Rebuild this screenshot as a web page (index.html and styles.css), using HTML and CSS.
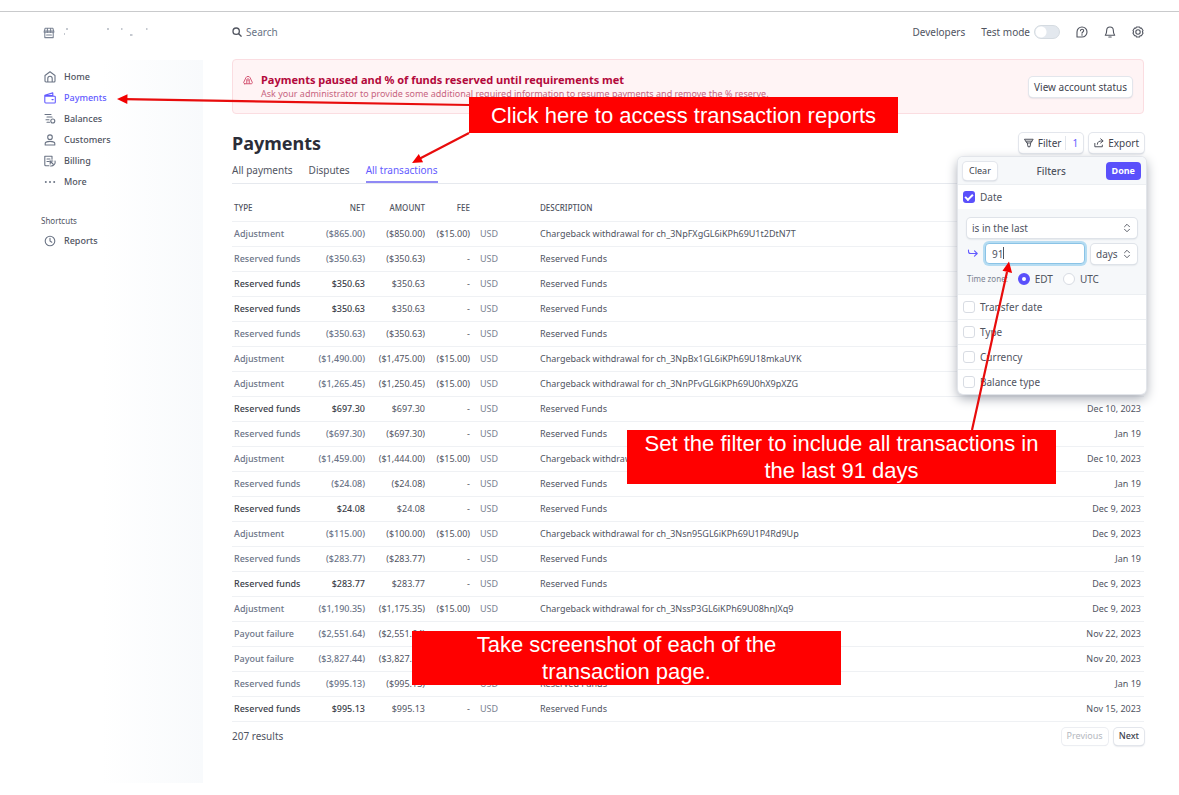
FILE: index.html
```html
<!DOCTYPE html>
<html lang="en">
<head>
<meta charset="utf-8">
<title>Payments</title>
<link rel="stylesheet" href="styles.css">
</head>
<body>
<div class="app">
  <aside class="sidebar">
    <div class="brand">
      <svg class="icon" viewBox="0 0 12 12"><path d="M2.2 1.2h7.6l1 3.2v.8H1.2v-.8zM1.8 5.4v5.2h8.4V5.4M1.2 4h9.6M4.4 1.4v4M7.6 1.4v4M3.6 8h4.8"/></svg>
      <svg class="smudge" viewBox="0 0 90 12"><path d="M2 2h2M0 7h1M43 2h2M57 2h1.500M66 8h2.500M82 2h1.500"/></svg>
    </div>
    <nav class="nav">
      <a href="#"><svg class="icon" viewBox="0 0 12 12"><path d="M1 4.500 6 .8l5 3.700v5.500a1 1 0 0 1-1 1H2a1 1 0 0 1-1-1zM3.800 11V7.500a2.200 2.200 0 0 1 4.400 0V11"/></svg>Home</a>
      <a href="#" class="active"><svg class="icon" viewBox="0 0 12 12"><path d="M1 4.200h9.500a.8.8 0 0 1 .8.8v5.200a.8.8 0 0 1-.8.8H1.700a.9.900 0 0 1-.9-.9V3.200L8.800.9v3.300M1 3.500h8M8 7.600h1.200" /></svg>Payments</a>
      <a href="#"><svg class="icon" viewBox="0 0 12 12"><path d="M1 1.500h6M3 4h5M2 6.800h3M3 9.200h2.500"/><circle cx="8.800" cy="8" r="2"/></svg>Balances</a>
      <a href="#"><svg class="icon" viewBox="0 0 12 12"><circle cx="6" cy="3.200" r="2.300"/><path d="M1.200 11V9.600c0-1.700 2-2.200 4.800-2.200s4.800.5 4.800 2.200V11z"/></svg>Customers</a>
      <a href="#"><svg class="icon" viewBox="0 0 12 12"><path d="M5 10.800H1.800a1 1 0 0 1-1-1V1.200H8v3M3 4h3M3 6.500h2M6 6l3 3M6.200 9V6h2.600M11 6a4 4 0 0 1-4.500 5"/></svg>Billing</a>
      <a href="#"><svg class="icon dots" viewBox="0 0 12 12"><circle cx="1.800" cy="6" r="1"/><circle cx="6" cy="6" r="1"/><circle cx="10.200" cy="6" r="1"/></svg>More</a>
    </nav>
    <h2 class="nav-title">Shortcuts</h2>
    <nav class="nav">
      <a href="#"><svg class="icon" viewBox="0 0 12 12"><circle cx="6" cy="6" r="4.800"/><path d="M6 3.200V6l1.800 1.200"/></svg>Reports</a>
    </nav>
  </aside>

  <main class="main">
    <header class="topbar">
      <label class="search">
        <svg class="icon small heavy" viewBox="0 0 12 12"><circle cx="5" cy="5" r="3.800"/><path d="m8 8 3 3"/></svg>
        <input type="search" placeholder="Search" aria-label="Search">
      </label>
      <div class="tools">
        <a href="#">Developers</a>
        <label class="switch">Test mode <input type="checkbox"></label>
        <button class="bare" aria-label="Help"><svg class="icon" viewBox="0 0 12 12"><path d="M1 11V6a5 5 0 1 1 5 5zM4.500 4.800c0-2 3.200-2 3.200 0C7.700 6 6 6 6 7.200M6 8.500v.8"/></svg></button>
        <button class="bare" aria-label="Notifications"><svg class="icon" viewBox="0 0 12 12"><path d="M1.300 9.300h9.400C9.600 8 9.300 7 9.300 4.300a3.300 3.300 0 0 0-6.600 0C2.700 7 2.400 8 1.300 9.300zM4.800 11h2.400"/></svg></button>
        <button class="bare" aria-label="Settings"><svg class="icon" viewBox="0 0 12 12"><path d="M4.500 1h3l.6 1.100 1.300-.1 1.600 2.500-.6 1.300.6 1.400-1.600 2.600-1.300-.1-.6 1.300h-3l-.6-1.300-1.300.1L1 7.200l.6-1.400L1 4.500 2.600 2l1.300.1z"/><circle cx="6" cy="6" r="2.200"/></svg></button>
      </div>
    </header>

    <section class="banner">
      <svg class="icon small" viewBox="0 0 12 12"><path d="M2 10.500h8a1.300 1.300 0 0 0 1-2L8.500 3.200a2.800 2.800 0 0 0-5 0L1 8.500a1.300 1.300 0 0 0 1 2zM4.500 10V5.500M7.500 10V5.500M6 4v3"/></svg>
      <div class="banner-text">
        <strong>Payments paused and % of funds reserved until requirements met</strong>
        <p>Ask your administrator to provide some additional required information to resume payments and remove the % reserve.</p>
      </div>
      <button class="btn">View account status</button>
    </section>

    <div class="heading">
      <h1>Payments</h1>
      <div class="actions">
        <button class="btn"><svg class="icon small" viewBox="0 0 12 12"><path d="M1 1.500h10L8 6H4zM4 6l.8 4.500h2.400L8 6M2.500 3.800h7"/></svg>Filter<span class="count">1</span></button>
        <button class="btn"><svg class="icon small" viewBox="0 0 12 12"><path d="M1 6.500V10.500h9V8.500M4 7.500c0-3 2-4 6-4M8 1l3 2.500L8 6"/></svg>Export</button>
        <form class="filters">
          <div class="filters-head">
            <button type="button" class="btn">Clear</button>
            <h2>Filters</h2>
            <button type="button" class="btn primary">Done</button>
          </div>
          <label class="filter-row"><input type="checkbox" checked>Date</label>
          <div class="filter-body">
            <span class="select"><select aria-label="Date condition"><option>is in the last</option></select><svg class="icon chevrons" viewBox="0 0 8 12"><path d="M1 4.500 4 1.500l3 3M1 7.500l3 3 3-3"/></svg></span>
            <div class="range">
              <svg class="icon turn" viewBox="0 0 12 12"><path d="M1.500 2v1.500a2 2 0 0 0 2 2H10M7.500 2.800 10.200 5.500 7.500 8.200"/></svg>
              <input class="number" type="text" value="91" aria-label="Number of days">
              <span class="select"><select aria-label="Unit"><option>days</option></select><svg class="icon chevrons" viewBox="0 0 8 12"><path d="M1 4.500 4 1.500l3 3M1 7.500l3 3 3-3"/></svg></span>
              <i class="caret"></i>
            </div>
            <div class="zone">
              <span>Time zone:</span>
              <label><input type="radio" name="zone" checked>EDT</label>
              <label><input type="radio" name="zone">UTC</label>
            </div>
          </div>
          <label class="filter-row"><input type="checkbox">Transfer date</label>
          <label class="filter-row"><input type="checkbox">Type</label>
          <label class="filter-row"><input type="checkbox">Currency</label>
          <label class="filter-row"><input type="checkbox">Balance type</label>
        </form>
      </div>
    </div>

    <nav class="tabs">
      <a href="#">All payments</a>
      <a href="#">Disputes</a>
      <a href="#" class="active">All transactions</a>
    </nav>

    <table class="grid">
      <thead>
        <tr><th class="type">Type</th><th class="net">Net</th><th class="amount">Amount</th><th class="fee">Fee</th><th class="cur"></th><th>Description</th><th class="date"></th></tr>
      </thead>
      <tbody>
        <tr><td>Adjustment</td><td>($865.00)</td><td>($850.00)</td><td>($15.00)</td><td>USD</td><td>Chargeback withdrawal for ch_3NpFXgGL6iKPh69U1t2DtN7T</td><td></td></tr>
        <tr><td>Reserved funds</td><td>($350.63)</td><td>($350.63)</td><td>-</td><td>USD</td><td>Reserved Funds</td><td></td></tr>
        <tr class="in"><td>Reserved funds</td><td>$350.63</td><td>$350.63</td><td>-</td><td>USD</td><td>Reserved Funds</td><td></td></tr>
        <tr class="in"><td>Reserved funds</td><td>$350.63</td><td>$350.63</td><td>-</td><td>USD</td><td>Reserved Funds</td><td></td></tr>
        <tr><td>Reserved funds</td><td>($350.63)</td><td>($350.63)</td><td>-</td><td>USD</td><td>Reserved Funds</td><td></td></tr>
        <tr><td>Adjustment</td><td>($1,490.00)</td><td>($1,475.00)</td><td>($15.00)</td><td>USD</td><td>Chargeback withdrawal for ch_3NpBx1GL6iKPh69U18mkaUYK</td><td></td></tr>
        <tr><td>Adjustment</td><td>($1,265.45)</td><td>($1,250.45)</td><td>($15.00)</td><td>USD</td><td>Chargeback withdrawal for ch_3NnPFvGL6iKPh69U0hX9pXZG</td><td></td></tr>
        <tr class="in"><td>Reserved funds</td><td>$697.30</td><td>$697.30</td><td>-</td><td>USD</td><td>Reserved Funds</td><td>Dec 10, 2023</td></tr>
        <tr><td>Reserved funds</td><td>($697.30)</td><td>($697.30)</td><td>-</td><td>USD</td><td>Reserved Funds</td><td>Jan 19</td></tr>
        <tr><td>Adjustment</td><td>($1,459.00)</td><td>($1,444.00)</td><td>($15.00)</td><td>USD</td><td>Chargeback withdrawal</td><td>Dec 10, 2023</td></tr>
        <tr><td>Reserved funds</td><td>($24.08)</td><td>($24.08)</td><td>-</td><td>USD</td><td>Reserved Funds</td><td>Jan 19</td></tr>
        <tr class="in"><td>Reserved funds</td><td>$24.08</td><td>$24.08</td><td>-</td><td>USD</td><td>Reserved Funds</td><td>Dec 9, 2023</td></tr>
        <tr><td>Adjustment</td><td>($115.00)</td><td>($100.00)</td><td>($15.00)</td><td>USD</td><td>Chargeback withdrawal for ch_3Nsn95GL6iKPh69U1P4Rd9Up</td><td>Dec 9, 2023</td></tr>
        <tr><td>Reserved funds</td><td>($283.77)</td><td>($283.77)</td><td>-</td><td>USD</td><td>Reserved Funds</td><td>Jan 19</td></tr>
        <tr class="in"><td>Reserved funds</td><td>$283.77</td><td>$283.77</td><td>-</td><td>USD</td><td>Reserved Funds</td><td>Dec 9, 2023</td></tr>
        <tr><td>Adjustment</td><td>($1,190.35)</td><td>($1,175.35)</td><td>($15.00)</td><td>USD</td><td>Chargeback withdrawal for ch_3NssP3GL6iKPh69U08hnJXq9</td><td>Dec 9, 2023</td></tr>
        <tr><td>Payout failure</td><td>($2,551.64)</td><td>($2,551.64)</td><td></td><td></td><td></td><td>Nov 22, 2023</td></tr>
        <tr><td>Payout failure</td><td>($3,827.44)</td><td>($3,827.44)</td><td></td><td></td><td></td><td>Nov 20, 2023</td></tr>
        <tr><td>Reserved funds</td><td>($995.13)</td><td>($995.13)</td><td>-</td><td>USD</td><td>Reserved Funds</td><td>Jan 19</td></tr>
        <tr class="in"><td>Reserved funds</td><td>$995.13</td><td>$995.13</td><td>-</td><td>USD</td><td>Reserved Funds</td><td>Nov 15, 2023</td></tr>
      </tbody>
    </table>

    <footer class="pager">
      <span>207 results</span>
      <button class="btn" disabled>Previous</button>
      <button class="btn strong">Next</button>
    </footer>
  </main>
</div>

<svg class="arrows" width="1179" height="795" viewBox="0 0 1179 795">
  <path class="shaft" d="M469 105 125 99.200M469 133l-50 26M972 430l35-158"/>
  <path class="head" d="M117 99l10.500-4.800-.2 9.800zM412 163l6.800-9 4.300 8.200zM1009 261.500l-6.500 9.300 9.600 2.200z"/>
</svg>
<div class="callout reports">Click here to access transaction reports</div>
<div class="callout range-note">Set the filter to include all transactions in<br>the last 91 days</div>
<div class="callout capture">Take screenshot of each of the<br>transaction page.</div>
</body>
</html>
```
FILE: styles.css
```css
* { box-sizing: border-box; }

body {
  margin: 0;
  padding-top: 11px;
  position: relative;
  background: #fff;
  color: #50545f;
  font: 10px/14px "Noto Sans", "Open Sans", sans-serif;
}

h1, h2, p { margin: 0; }
a { color: inherit; text-decoration: none; }
button, input, select { font: inherit; color: inherit; }

.icon {
  width: 12px;
  height: 12px;
  flex: none;
  fill: none;
  stroke: currentColor;
  stroke-width: 1.1;
  stroke-linecap: round;
  stroke-linejoin: round;
}
.icon.small { width: 10px; height: 10px; }
.icon.heavy { stroke-width: 1.600; }
.icon.dots { fill: currentColor; stroke: none; }

.app {
  display: flex;
  border-top: 1px solid #c9cacc;
}

/* Sidebar */
.sidebar {
  width: 203px;
  flex: none;
  padding: 14px 0 0 41px;
  min-height: 771px;
  background: linear-gradient(90deg, #fff 50%, #f8fafc) 0 48px no-repeat;
}
.brand {
  display: flex;
  align-items: center;
  gap: 9px;
  height: 14px;
  padding-left: 2px;
  margin-bottom: 26px;
  color: #7b8494;
}
.smudge { width: 90px; height: 12px; fill: none; stroke: #8b93a1; stroke-width: 1; }
.nav a {
  display: flex;
  align-items: center;
  gap: 8px;
  height: 21px;
  padding-left: 3px;
  font-size: 9px;
  font-weight: 500;
}
.nav .icon { color: #6b7485; }
.nav .active, .nav .active .icon { color: #635bff; }
.nav-title {
  padding: 22px 0 2px;
  font-size: 8px;
  font-weight: 400;
}

/* Main column */
.main {
  flex: 1;
  min-width: 0;
  padding: 10px 35px 0 29px;
}
.topbar {
  display: flex;
  justify-content: space-between;
  align-items: center;
  height: 20px;
}
.search { display: flex; align-items: center; gap: 4px; }
.search input {
  border: 0;
  padding: 0;
  background: none;
  outline: none;
}
.search input::placeholder { color: #687385; }
.tools { display: flex; align-items: center; gap: 16px; }
.switch { display: flex; align-items: center; gap: 4px; }
.switch input {
  appearance: none;
  width: 26px;
  height: 14px;
  margin: 0;
  border: 1px solid #d5dbe1;
  border-radius: 7px;
  background: radial-gradient(circle at 6px 6px, #fff 5px, #e3e8ee 6px);
}
.bare {
  display: flex;
  border: 0;
  padding: 0;
  background: none;
}

.btn {
  display: inline-flex;
  align-items: center;
  justify-content: center;
  gap: 4px;
  height: 20px;
  padding: 0 5px;
  border: 0;
  border-radius: 4px;
  background: #fff;
  box-shadow: 0 0 0 1px #e3e6ec, 0 1px 2px #b9bfca;
  color: #41444f;
}
.btn:disabled { color: #b5b8c0; box-shadow: 0 0 0 1px #eceef2, 0 1px 1px #e0e3e8; }
.btn.strong { font-weight: 500; }
.btn.primary {
  background: #5a50fb;
  box-shadow: none;
  color: #fff;
  font-size: 9px;
  font-weight: 700;
}

.banner {
  display: flex;
  align-items: center;
  gap: 8px;
  min-height: 55px;
  margin-top: 17px;
  padding: 0 11px 0 10px;
  border: 1px solid #fbdde1;
  border-radius: 4px;
  background: #fff4f5;
  color: #b3093c;
}
.banner-text { flex: 1; }
.banner strong { font-size: 11px; }
.banner > .icon { margin-bottom: 14px; color: #d14b6b; }
.banner p { font-size: 9px; color: #c76480; }

.heading {
  display: flex;
  justify-content: space-between;
  align-items: center;
  height: 28px;
  margin-top: 15px;
}
h1 { font-size: 18px; line-height: 28px; color: #2b2d38; }
.actions { position: relative; display: flex; gap: 6px; }
.count {
  padding-left: 6px;
  border-left: 1px solid #e3e6ec;
  color: #635bff;
}

.tabs {
  display: flex;
  gap: 16px;
  border-bottom: 1px solid #e6e9ee;
}
.tabs a { height: 26px; padding-top: 6px; }
.tabs .active {
  color: #635bff;
  border-bottom: 2px solid #8f89f5;
}

/* Transactions */
.grid {
  width: 100%;
  margin-top: 12px;
  table-layout: fixed;
  border-collapse: collapse;
  font-size: 9px;
}
.grid th, .grid td {
  height: 25px;
  padding: 0 5px;
  border-bottom: 1px solid #eff1f4;
  text-align: left;
  white-space: nowrap;
}
.grid th {
  font-size: 8px;
  font-weight: 500;
  text-transform: uppercase;
}
.grid th:first-child, .grid td:first-child { padding-left: 2px; }
.grid th:last-child, .grid td:last-child { padding-right: 3px; text-align: right; }
.grid th:nth-child(n+2):nth-child(-n+4),
.grid td:nth-child(n+2):nth-child(-n+4) { text-align: right; }
.grid td:nth-child(-n+2) { color: #6c7588; font-weight: 500; }
.grid td:nth-child(5) { color: #7b8291; }
.grid .in td:nth-child(-n+2) { color: #3c3f4a; }
.type { width: 75px; }
.net { width: 63px; }
.amount { width: 60px; }
.fee { width: 45px; }
.cur { width: 60px; }
.date { width: 120px; }

.pager {
  display: flex;
  align-items: center;
  gap: 6px;
  padding-top: 6px;
}
.pager span { flex: 1; }
.pager .btn { height: 17px; font-size: 9px; }

/* Filter popover */
.filters {
  position: absolute;
  top: 24px;
  right: -2px;
  width: 188px;
  border-radius: 5px;
  background: #fff;
  box-shadow: 0 0 0 1px #e2e5ea, 0 4px 12px #9ea3ad;
  overflow: hidden;
}
.filters-head {
  display: flex;
  align-items: center;
  justify-content: space-between;
  height: 27px;
  padding: 0 5px;
  background: #f6f8fa;
}
.filters-head .btn { height: 18px; padding: 0 6px; }
.filters-head .btn:first-child { font-size: 9px; }
.filters-head h2 { font-size: 10px; font-weight: 500; }
.filter-row {
  display: flex;
  align-items: center;
  gap: 5px;
  height: 25px;
  padding-left: 5px;
  border-top: 1px solid #eceff2;
}
.filters input[type="checkbox"], .filters input[type="radio"] {
  appearance: none;
  width: 12px;
  height: 12px;
  margin: 0;
  border: 1px solid #d8dce3;
  border-radius: 3px;
  background: #fff;
}
.filters input[type="checkbox"]:checked {
  border: 0;
  background: #5a50fb;
  display: grid;
  place-items: center;
}
.filters input[type="checkbox"]:checked::before {
  content: "";
  width: 6px;
  height: 3px;
  margin-bottom: 2px;
  border: solid #fff;
  border-width: 0 0 2px 2px;
  transform: rotate(-45deg);
}
.filters input[type="radio"] { border-radius: 50%; }
.filters input[type="radio"]:checked { border: 4px solid #5a50fb; }
.filter-body {
  display: flex;
  flex-direction: column;
  gap: 5px;
  padding: 9px 9px 5px;
  background: #f6f8fa;
}
.select { position: relative; display: flex; }
.select select {
  appearance: none;
  width: 100%;
  height: 20px;
  padding: 0 19px 0 5px;
  border: 0;
  border-radius: 4px;
  background: #fff;
  box-shadow: 0 0 0 1px #dfe3e9, 0 1px 2px #c3c8d1;
}
.chevrons { position: absolute; right: 6px; top: 5px; width: 8px; height: 10px; pointer-events: none; }
.range { position: relative; display: flex; align-items: center; gap: 6px; }
.turn { color: #635bff; }
.number {
  flex: 1;
  min-width: 0;
  height: 21px;
  padding: 0 6px;
  border: 1px solid #8ac3e6;
  border-radius: 4px;
  background: #fff;
  box-shadow: 0 0 0 2px #b5dcf2;
  outline: none;
}
.caret { position: absolute; left: 36px; top: 4px; width: 1px; height: 12px; background: #50545f; }
.zone { display: flex; align-items: center; gap: 10px; height: 20px; }
.zone span { font-size: 8px; color: #7b8291; }
.zone label { display: flex; align-items: center; gap: 5px; }

/* Annotations drawn over the page */
.arrows { position: absolute; top: 0; left: 0; pointer-events: none; }
.shaft { stroke: #e80c0c; stroke-width: 2.200; fill: none; }
.head { fill: #f20000; }
.callout {
  position: absolute;
  width: 429px;
  background: #f00;
  color: #fff;
  font: 22px/27px "Liberation Sans", Arial, sans-serif;
  text-align: center;
}
.reports { left: 469px; top: 97px; padding: 5px 0 4px; }
.range-note { left: 627px; top: 430px; }
.capture { left: 412px; top: 631px; }
```
